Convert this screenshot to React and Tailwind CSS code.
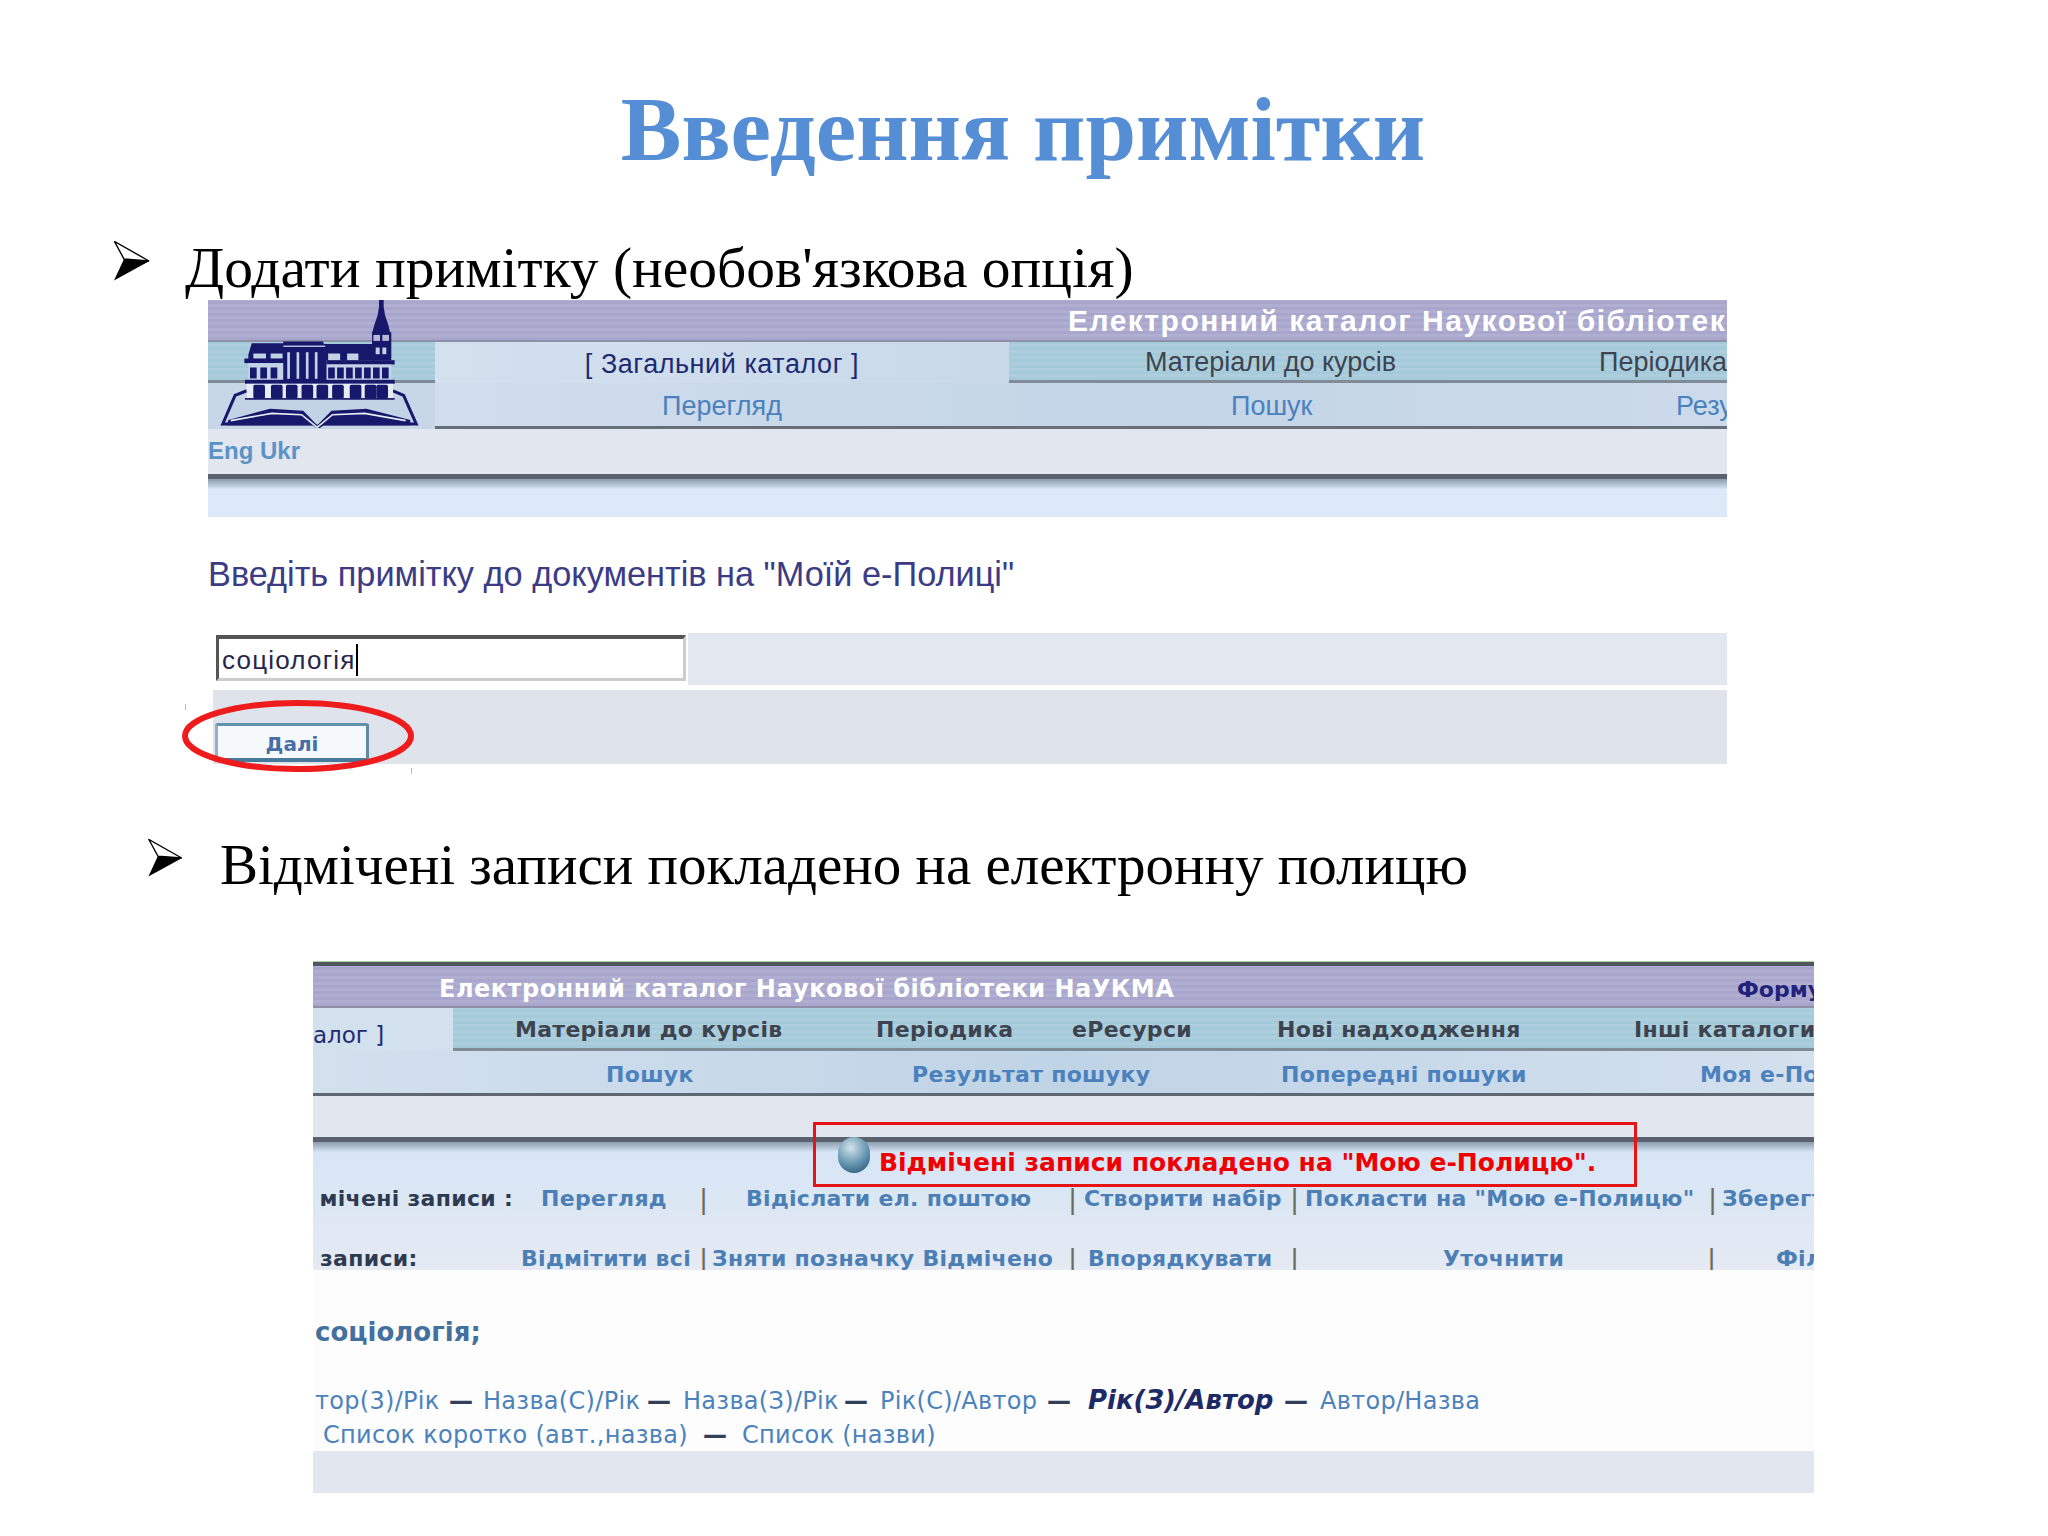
const NAVY = '#17176b';
const LIGHT = '#c3d3e6';

const upperWindows = [150, 181, 212, 385, 412, 439, 466, 493, 520, 547];
const arches = [160, 213, 258, 305, 350, 397, 450, 495, 530];
const columnGaps = [262, 290, 318, 345];

function Logo() {
  return (
    <svg viewBox="58 15 602 385" className="absolute left-[11px] top-0 w-[201px] h-[128px]">
      <path d="M140 288 L105 302 L68 388 L340 388 L355 398 L370 388 L650 388 L612 302 L580 288" fill={LIGHT} stroke={NAVY} strokeWidth="9" />
      <path d="M85 376 L210 342 L310 348 L352 392 L395 348 L500 342 L632 376 L632 392 L80 392 Z" fill={NAVY} />
      <path d="M92 378 L215 356 L305 360 L352 398 L398 360 L495 356 L618 378" fill="none" stroke="#e6edf5" strokeWidth="5" />
      <path d="M538 15 L552 15 L552 35 L556 60 L566 90 L572 115 L517 115 L524 90 L534 60 L538 35 Z" fill={NAVY} />
      <rect x="517" y="112" width="58" height="85" fill={NAVY} />
      <rect x="521" y="120" width="20" height="18" fill="#b9b7d4" />
      <rect x="548" y="120" width="20" height="18" fill="#b9b7d4" />
      <rect x="528" y="158" width="12" height="20" fill={LIGHT} />
      <rect x="548" y="158" width="12" height="20" fill={LIGHT} />
      <path d="M145 180 L155 145 L250 145 L250 140 L370 140 L372 147 L518 147 L518 197 L145 197 Z" fill={NAVY} />
      <rect x="250" y="152" width="126" height="4" fill={LIGHT} />
      <rect x="160" y="176" width="38" height="16" fill={LIGHT} />
      <rect x="212" y="176" width="36" height="16" fill={LIGHT} />
      <rect x="385" y="176" width="36" height="22" fill={LIGHT} />
      <rect x="442" y="176" width="34" height="22" fill={LIGHT} />
      <rect x="133" y="191" width="120" height="14" fill={NAVY} />
      <rect x="380" y="196" width="205" height="13" fill={NAVY} />
      <rect x="145" y="205" width="105" height="52" fill={LIGHT} />
      <rect x="380" y="209" width="195" height="48" fill={LIGHT} />
      <rect x="250" y="172" width="130" height="85" fill={NAVY} />
      {columnGaps.map((x) => (
        <rect key={x} x={x} y="172" width="8" height="80" fill={LIGHT} />
      ))}
      {upperWindows.map((x) => (
        <rect key={x} x={x} y="218" width="20" height="33" fill={NAVY} />
      ))}
      <rect x="135" y="255" width="450" height="12" fill={NAVY} />
      <rect x="140" y="267" width="440" height="45" fill="#e6edf5" />
      {arches.map((x) => (
        <rect key={x} x={x} y="270" width="35" height="42" rx="5" fill={NAVY} />
      ))}
      <rect x="135" y="310" width="450" height="5" fill={NAVY} />
    </svg>
  );
}

function Arrow({ className }) {
  return (
    <svg viewBox="0 0 36 40" className={className}>
      <path d="M0.5 0.5 L35 20 L10 18 Z" fill="white" stroke="black" strokeWidth="1.4" />
      <path d="M10 18 L35.5 20 L0 39.5 Z" fill="black" />
    </svg>
  );
}

function ThickLine() {
  return (
    <>
      <div className="h-[5px] bg-[#59626e]" />
      <div className="h-[10px] bg-gradient-to-b from-[#8b9cae] to-[#d6e5f5]" />
    </>
  );
}

const sep = 'text-[#6a6a60] font-normal text-[27px] leading-none';
const dash = 'text-[#33405a] font-bold';

export default function App() {
  return (
    <div className="w-[2048px] h-[1536px] bg-white overflow-hidden font-['Liberation_Serif',serif]">
      {/* Title */}
      <div className="h-[230px] pt-[84px] text-center">
        <h1 className="ml-[-2px] text-[91px] leading-[91px] font-bold text-[#558ed5]">Введення примітки</h1>
      </div>

      {/* First bullet */}
      <div className="h-[70px] flex items-start text-black">
        <Arrow className="ml-[114px] mt-[11px] w-[36px] h-[40px] shrink-0" />
        <p className="ml-[35px] mt-[3px] text-[57.5px] leading-[70px] whitespace-nowrap">Додати примітку (необов'язкова опція)</p>
      </div>

      {/* First catalogue capture */}
      <div className="relative ml-[208px] w-[1519px] font-['Liberation_Sans',sans-serif] overflow-visible">
        <div className="relative overflow-hidden">
          <div className="h-[42px] pl-[860px] flex items-center border-b-[2px] border-[#8f8fa8] bg-[repeating-linear-gradient(0deg,#a8a6cc_0px,#a8a6cc_3px,#b0aed1_3px,#b0aed1_6px)]">
            <span className="text-[30px] font-bold text-white whitespace-nowrap tracking-[1.5px]">Електронний каталог Наукової бібліотеки НаУКМА</span>
          </div>
          <div className="flex h-[41px] text-[27px] whitespace-nowrap">
            <div className="w-[227px] shrink-0 border-b-[3px] border-[#818b95] bg-[repeating-linear-gradient(0deg,#a5cada_0px,#a5cada_3px,#adcfdd_3px,#adcfdd_6px)]" />
            <div className="w-[574px] shrink-0 flex items-center justify-center pt-[3px] bg-gradient-to-r from-[#d3e0ee] to-[#c9d9ea] text-[#1d2a72] tracking-[0.55px]">[ Загальний каталог ]</div>
            <div className="flex-1 flex items-center pt-[3px] border-b-[3px] border-[#818b95] text-[#3d4450] bg-[repeating-linear-gradient(0deg,#a5cada_0px,#a5cada_3px,#adcfdd_3px,#adcfdd_6px)]">
              <span className="w-[590px] shrink-0 pl-[136px]">Матеріали до курсів</span>
              <span>Періодика</span>
            </div>
          </div>
          <div className="flex h-[46px] text-[27px] text-[#4b81bd] whitespace-nowrap">
            <div className="w-[227px] shrink-0 bg-[#c8d7e8]" />
            <div className="flex-1 flex items-center pt-[4px] border-b-[3px] border-[#666f7a] bg-gradient-to-r from-[#d0dded] via-[#c3d5e7] to-[#cfdcec]">
              <span className="w-[574px] shrink-0 text-center">Перегляд</span>
              <span className="w-[667px] shrink-0 pl-[222px]">Пошук</span>
              <span>Результат пошуку</span>
            </div>
          </div>
          <div className="h-[45px] pb-[2px] bg-[#e2e6ef] flex items-center text-[24px] text-[#5b93c6] font-bold">Eng Ukr</div>
          <ThickLine />
          <div className="h-[28px] bg-[#dbe9f8]" />
          <Logo />
        </div>

        {/* Note form */}
        <div className="relative">
          <p className="h-[116px] pt-[37px] text-[34.3px] leading-[40px] text-[#3c3c86] whitespace-nowrap">Введіть примітку до документів на "Моїй е-Полиці"</p>
          <div className="ml-[5px] h-[52px] bg-[#e3e7ef]">
            <div className="w-[475px] h-[52px] bg-white p-[2px]">
              <div className="h-[46px] ml-[1px] pl-[3px] pt-[3px] flex items-center border-t-[4px] border-l-[3px] border-b-[3px] border-r-[3px] border-t-[#555] border-l-[#555] border-b-[#ccc] border-r-[#ccc] bg-white text-[26px] tracking-[1.2px] text-[#26264a]">
                соціологія
                <span className="w-[2px] h-[32px] bg-black" />
              </div>
            </div>
          </div>
          <div className="ml-[5px] mt-[5px] h-[74px] pt-[33px] bg-[#dfe4ec]">
            <div className="ml-[2px] w-[154px] h-[39px] pt-[3px] flex items-center justify-center rounded-t-[3px] border-t-[3px] border-l-[3px] border-r-[3px] border-b-[4px] border-t-[#5f93ac] border-l-[#8db3c8] border-r-[#5f8aa0] border-b-[#46799a] bg-[#f5f9fb] text-[20px] font-bold text-[#476ea6] font-['DejaVu_Sans',sans-serif]">Далі</div>
          </div>
          <svg viewBox="0 0 232 72" className="absolute left-[-26px] top-[183px] w-[232px] h-[72px]">
            <ellipse cx="116" cy="36" rx="113" ry="33" fill="none" stroke="#ee1c1c" strokeWidth="6" />
          </svg>
          <span className="absolute left-[-23px] top-[187px] w-px h-[6px] bg-[#f4a0a8]" />
          <span className="absolute left-[203px] top-[251px] w-px h-[6px] bg-[#f4a0a8]" />
        </div>
      </div>

      {/* Second bullet */}
      <div className="h-[197px] flex items-start text-black">
        <Arrow className="ml-[148px] mt-[75px] w-[35px] h-[38px] shrink-0" />
        <p className="ml-[37px] mt-[66px] text-[57px] leading-[70px] whitespace-nowrap">Відмічені записи покладено на електронну полицю</p>
      </div>

      {/* Second catalogue capture */}
      <div className="relative ml-[313px] w-[1501px] overflow-hidden font-['DejaVu_Sans',sans-serif] font-bold whitespace-nowrap bg-[#fdfdfe]">
        <div className="h-[1px] bg-[#a9cfa9]" />
        <div className="h-[4px] bg-[#4f5660]" />
        <div className="h-[42px] pt-[6px] flex items-center border-b-[2px] border-[#8f8fa8] bg-[repeating-linear-gradient(0deg,#a8a6cc_0px,#a8a6cc_3px,#b0aed1_3px,#b0aed1_6px)]">
          <span className="w-[1424px] shrink-0 pl-[126px] text-[24px] tracking-[0.5px] text-white">Електронний каталог Наукової бібліотеки НаУКМА</span>
          <span className="text-[22px] text-[#22227a]">Формуляр</span>
        </div>
        <div className="flex h-[43px] text-[22px] tracking-[0.3px]">
          <div className="w-[140px] shrink-0 text-right pr-[70px] pt-[10px] text-[#1f2c70] text-[23px] font-normal bg-[#d3e0ee] tracking-normal">алог ]</div>
          <div className="flex-1 flex items-center pt-[3px] border-b-[3px] border-[#818b95] text-[#3d4450] bg-[repeating-linear-gradient(0deg,#a5cada_0px,#a5cada_3px,#adcfdd_3px,#adcfdd_6px)]">
            <span className="w-[423px] shrink-0 pl-[62px]">Матеріали до курсів</span>
            <span className="w-[196px] shrink-0">Періодика</span>
            <span className="w-[205px] shrink-0">еРесурси</span>
            <span className="w-[357px] shrink-0">Нові надходження</span>
            <span>Інші каталоги</span>
          </div>
        </div>
        <div className="flex items-center h-[45px] pt-[4px] text-[22px] tracking-[0.3px] text-[#4b81bd] border-b-[3px] border-[#5f6872] bg-gradient-to-r from-[#d3e0ee] via-[#bfd4e6] to-[#d3e0ee]">
          <span className="w-[599px] shrink-0 pl-[293px]">Пошук</span>
          <span className="w-[369px] shrink-0">Результат пошуку</span>
          <span className="w-[419px] shrink-0">Попередні пошуки</span>
          <span>Моя е-Полиця</span>
        </div>
        <div className="h-[41px] bg-[#e2e6ef]" />
        <ThickLine />
        <div className="h-[118px] overflow-hidden bg-gradient-to-b from-[#d6e5f5] to-[#e5eaf3] text-[22px] tracking-[0.3px] text-[#4b7fb5]">
          <div className="mt-[26px] h-[40px] flex items-center">
            <span className="w-[200px] shrink-0 text-right text-[#2e3a50]">мічені записи :</span>
            <span className="w-[186px] shrink-0 pl-[28px]">Перегляд</span>
            <span className={`w-[47px] shrink-0 ${sep}`}>|</span>
            <span className="w-[322px] shrink-0">Відіслати ел. поштою</span>
            <span className={`w-[16px] shrink-0 ${sep}`}>|</span>
            <span className="w-[206px] shrink-0">Створити набір</span>
            <span className={`w-[15px] shrink-0 ${sep}`}>|</span>
            <span className="w-[403px] shrink-0">Покласти на "Мою е-Полицю"</span>
            <span className={`w-[14px] shrink-0 ${sep}`}>|</span>
            <span>Зберегти</span>
          </div>
          <div className="mt-[28px] h-[24px] flex items-center">
            <span className="w-[208px] shrink-0 pl-[7px] text-[#2e3a50]">записи:</span>
            <span className="w-[178px] shrink-0">Відмітити всі</span>
            <span className={`w-[13px] shrink-0 ${sep}`}>|</span>
            <span className="w-[356px] shrink-0">Зняти позначку Відмічено</span>
            <span className={`w-[20px] shrink-0 ${sep}`}>|</span>
            <span className="w-[202px] shrink-0">Впорядкувати</span>
            <span className={`w-[153px] shrink-0 ${sep}`}>|</span>
            <span className="w-[264px] shrink-0">Уточнити</span>
            <span className={`w-[69px] shrink-0 ${sep}`}>|</span>
            <span>Фільтр</span>
          </div>
        </div>
        <div className="h-[181px]">
          <p className="h-[113px] pt-[44px] pl-[2px] text-[26px] leading-[36px] text-[#44709f]">соціологія;</p>
          <div className="flex items-center h-[34px] pt-[1px] pl-[2px] text-[24px] tracking-[0.3px] font-normal text-[#4b82bb]">
            <span className="w-[134px] shrink-0">тор(3)/Рік</span>
            <span className={`w-[32px] shrink-0 ${dash}`}>—</span>
            <span className="w-[166px] shrink-0 pl-[2px]">Назва(С)/Рік</span>
            <span className={`w-[34px] shrink-0 ${dash}`}>—</span>
            <span className="w-[163px] shrink-0 pl-[2px]">Назва(З)/Рік</span>
            <span className={`w-[34px] shrink-0 ${dash}`}>—</span>
            <span className="w-[169px] shrink-0 pl-[2px]">Рік(С)/Автор</span>
            <span className={`w-[41px] shrink-0 ${dash}`}>—</span>
            <span className="w-[196px] shrink-0 text-[26px] font-bold italic tracking-normal text-[#1e2a66]">Рік(З)/Автор</span>
            <span className={`w-[34px] shrink-0 ${dash}`}>—</span>
            <span className="pl-[2px]">Автор/Назва</span>
          </div>
          <div className="flex items-center h-[34px] pt-[1px] pl-[10px] text-[24px] tracking-[0.3px] font-normal text-[#4b82bb]">
            <span className="w-[380px] shrink-0">Список коротко (авт.,назва)</span>
            <span className={`w-[39px] shrink-0 ${dash}`}>—</span>
            <span>Список (назви)</span>
          </div>
        </div>
        <div className="h-[42px] bg-[#e2e6ef]" />

        {/* Notice frame drawn over the capture */}
        <div className="absolute left-[500px] top-[161px] w-[824px] h-[65px] border-[3px] border-[#e81414] flex items-start">
          <span className="ml-[22px] mt-[12px] w-[32px] h-[36px] shrink-0 rounded-full bg-[radial-gradient(circle_at_40%_30%,#d3e3ec,#5f90ac_55%,#1f4d68)]" />
          <span className="ml-[9px] mt-[24px] text-[25px] leading-[28px] text-[#f00000]">Відмічені записи покладено на "Мою е-Полицю".</span>
        </div>
      </div>
    </div>
  );
}
